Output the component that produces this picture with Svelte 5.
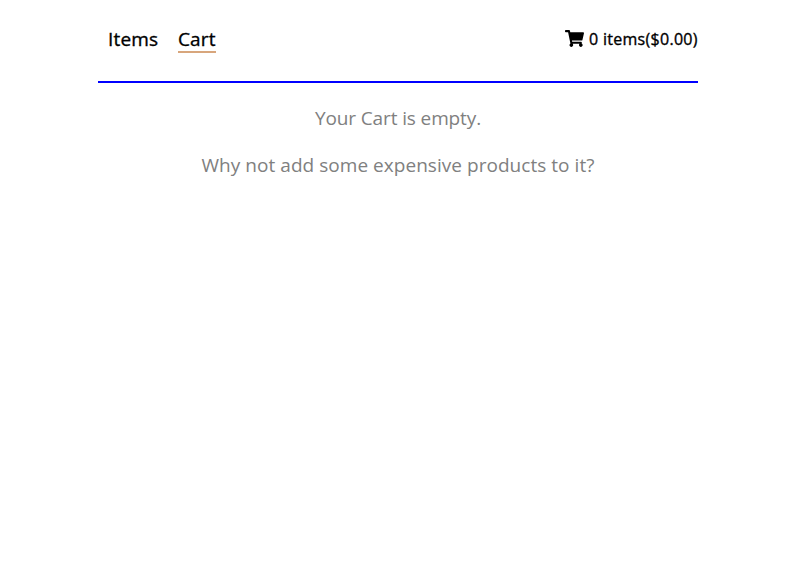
<script>
  const count = 0;
  const total = 0;
</script>

<div class="page">
  <header>
    <nav>
      <a class="items" href="#items">Items</a>
      <a class="cart active" href="#cart">Cart</a>
    </nav>
    <div class="summary">
      <svg viewBox="0 0 576 512" width="19" height="17" aria-hidden="true"><path d="M528.12 301.319l47.273-208C578.806 78.301 567.391 64 551.99 64H159.208l-9.166-44.81C147.758 8.021 137.93 0 126.529 0H24C10.745 0 0 10.745 0 24v16c0 13.255 10.745 24 24 24h69.883l70.248 343.435C147.325 417.1 136 435.222 136 456c0 30.928 25.072 56 56 56s56-25.072 56-56c0-15.674-6.447-29.835-16.824-40h209.647C430.447 426.165 424 440.326 424 456c0 30.928 25.072 56 56 56s56-25.072 56-56c0-22.172-12.888-41.332-31.579-50.405l5.517-24.276c3.413-15.018-8.002-29.319-23.403-29.319H218.117l-6.545-32h293.145c11.206 0 20.92-7.754 23.403-18.681z"/></svg>
      <span class="label">{count} items(${total.toFixed(2)})</span>
    </div>
  </header>
  <main>
    <p class="one">Your Cart is empty.</p>
    <p class="two">Why not add some expensive products to it?</p>
  </main>
</div>

<style>
  .page { width: 600px; margin-left: 98px; font-family: "Open Sans", "Noto Sans", sans-serif; }
  header { display: flex; justify-content: space-between; box-sizing: border-box; height: 83px; padding: 26px 0 0 10px; border-bottom: 2px solid #0000ff; }
  nav { display: flex; gap: 20px; }
  a { height: 25px; line-height: 26px; font-size: 19px; letter-spacing: 0.15px; color: #000; -webkit-text-stroke: 0.35px #000; text-decoration: none; border-bottom: 2px solid transparent; white-space: nowrap; }
  .items { width: 50px; }
  .cart { width: 38px; }
  .active { border-color: #d8a67c; }
  .summary { display: flex; gap: 5px; height: 26px; line-height: 26px; font-size: 16px; }
  svg { margin-top: 4px; }
  .label { white-space: nowrap; width: 109px; letter-spacing: 0.29px; -webkit-text-stroke: 0.35px #000; }
  main { padding-top: 22px; text-align: center; color: #808080; font-size: 19px; line-height: 27px; }
  p { margin: 0 0 20px; white-space: nowrap; }
  .one { letter-spacing: -0.12px; }
  .two { letter-spacing: 0.04px; }
</style>
